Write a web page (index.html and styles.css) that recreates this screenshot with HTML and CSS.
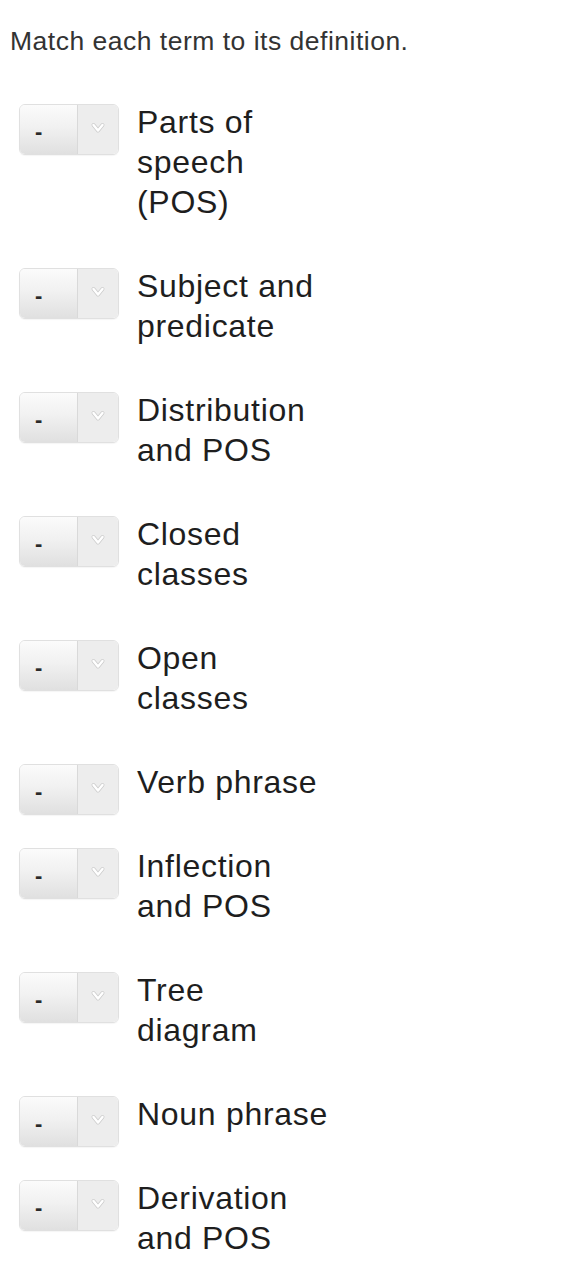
FILE: index.html
```html
<!DOCTYPE html>
<html lang="en">
<head>
<meta charset="utf-8">
<title>Match each term</title>
<link rel="stylesheet" href="styles.css">
</head>
<body>
<p class="prompt">Match each term to its definition.</p>
<div class="list">
  <div class="row"><div class="select"><span class="val">-</span><span class="arrow"><svg width="16" height="12" viewBox="0 0 16 12"><path d="M3.5 3 L8 8.5 L12.5 3" fill="none" stroke="#cdcdcd" stroke-width="4" stroke-linecap="round" stroke-linejoin="round"/><path d="M3.5 3 L8 8.5 L12.5 3" fill="none" stroke="#ffffff" stroke-width="2.4" stroke-linecap="round" stroke-linejoin="round"/></svg></span></div><div class="term">Parts of speech (POS)</div></div>
  <div class="row"><div class="select"><span class="val">-</span><span class="arrow"><svg width="16" height="12" viewBox="0 0 16 12"><path d="M3.5 3 L8 8.5 L12.5 3" fill="none" stroke="#cdcdcd" stroke-width="4" stroke-linecap="round" stroke-linejoin="round"/><path d="M3.5 3 L8 8.5 L12.5 3" fill="none" stroke="#ffffff" stroke-width="2.4" stroke-linecap="round" stroke-linejoin="round"/></svg></span></div><div class="term">Subject and predicate</div></div>
  <div class="row"><div class="select"><span class="val">-</span><span class="arrow"><svg width="16" height="12" viewBox="0 0 16 12"><path d="M3.5 3 L8 8.5 L12.5 3" fill="none" stroke="#cdcdcd" stroke-width="4" stroke-linecap="round" stroke-linejoin="round"/><path d="M3.5 3 L8 8.5 L12.5 3" fill="none" stroke="#ffffff" stroke-width="2.4" stroke-linecap="round" stroke-linejoin="round"/></svg></span></div><div class="term">Distribution and POS</div></div>
  <div class="row"><div class="select"><span class="val">-</span><span class="arrow"><svg width="16" height="12" viewBox="0 0 16 12"><path d="M3.5 3 L8 8.5 L12.5 3" fill="none" stroke="#cdcdcd" stroke-width="4" stroke-linecap="round" stroke-linejoin="round"/><path d="M3.5 3 L8 8.5 L12.5 3" fill="none" stroke="#ffffff" stroke-width="2.4" stroke-linecap="round" stroke-linejoin="round"/></svg></span></div><div class="term">Closed classes</div></div>
  <div class="row"><div class="select"><span class="val">-</span><span class="arrow"><svg width="16" height="12" viewBox="0 0 16 12"><path d="M3.5 3 L8 8.5 L12.5 3" fill="none" stroke="#cdcdcd" stroke-width="4" stroke-linecap="round" stroke-linejoin="round"/><path d="M3.5 3 L8 8.5 L12.5 3" fill="none" stroke="#ffffff" stroke-width="2.4" stroke-linecap="round" stroke-linejoin="round"/></svg></span></div><div class="term">Open classes</div></div>
  <div class="row"><div class="select"><span class="val">-</span><span class="arrow"><svg width="16" height="12" viewBox="0 0 16 12"><path d="M3.5 3 L8 8.5 L12.5 3" fill="none" stroke="#cdcdcd" stroke-width="4" stroke-linecap="round" stroke-linejoin="round"/><path d="M3.5 3 L8 8.5 L12.5 3" fill="none" stroke="#ffffff" stroke-width="2.4" stroke-linecap="round" stroke-linejoin="round"/></svg></span></div><div class="term">Verb phrase</div></div>
  <div class="row"><div class="select"><span class="val">-</span><span class="arrow"><svg width="16" height="12" viewBox="0 0 16 12"><path d="M3.5 3 L8 8.5 L12.5 3" fill="none" stroke="#cdcdcd" stroke-width="4" stroke-linecap="round" stroke-linejoin="round"/><path d="M3.5 3 L8 8.5 L12.5 3" fill="none" stroke="#ffffff" stroke-width="2.4" stroke-linecap="round" stroke-linejoin="round"/></svg></span></div><div class="term">Inflection and POS</div></div>
  <div class="row"><div class="select"><span class="val">-</span><span class="arrow"><svg width="16" height="12" viewBox="0 0 16 12"><path d="M3.5 3 L8 8.5 L12.5 3" fill="none" stroke="#cdcdcd" stroke-width="4" stroke-linecap="round" stroke-linejoin="round"/><path d="M3.5 3 L8 8.5 L12.5 3" fill="none" stroke="#ffffff" stroke-width="2.4" stroke-linecap="round" stroke-linejoin="round"/></svg></span></div><div class="term">Tree diagram</div></div>
  <div class="row"><div class="select"><span class="val">-</span><span class="arrow"><svg width="16" height="12" viewBox="0 0 16 12"><path d="M3.5 3 L8 8.5 L12.5 3" fill="none" stroke="#cdcdcd" stroke-width="4" stroke-linecap="round" stroke-linejoin="round"/><path d="M3.5 3 L8 8.5 L12.5 3" fill="none" stroke="#ffffff" stroke-width="2.4" stroke-linecap="round" stroke-linejoin="round"/></svg></span></div><div class="term">Noun phrase</div></div>
  <div class="row"><div class="select"><span class="val">-</span><span class="arrow"><svg width="16" height="12" viewBox="0 0 16 12"><path d="M3.5 3 L8 8.5 L12.5 3" fill="none" stroke="#cdcdcd" stroke-width="4" stroke-linecap="round" stroke-linejoin="round"/><path d="M3.5 3 L8 8.5 L12.5 3" fill="none" stroke="#ffffff" stroke-width="2.4" stroke-linecap="round" stroke-linejoin="round"/></svg></span></div><div class="term">Derivation and POS</div></div>
</div>
</body>
</html>
```

FILE: styles.css
```css
html, body {
  margin: 0;
  padding: 0;
  background: #ffffff;
}

body {
  font-family: "Liberation Sans", Arial, Helvetica, sans-serif;
  color: #222222;
}

.prompt {
  margin: 26px 0 0 10px;
  font-size: 26.5px;
  line-height: 30px;
  letter-spacing: 0.5px;
  color: #333333;
}

.list {
  margin-top: 46px;
  display: flex;
  flex-direction: column;
}

.row {
  display: flex;
  align-items: flex-start;
  padding-left: 19px;
  padding-bottom: 44px;
}

.select {
  box-sizing: border-box;
  width: 100px;
  height: 51px;
  margin-top: 2px;
  margin-bottom: -13px;
  border: 1px solid #e0e0e0;
  border-radius: 6px;
  display: flex;
  overflow: hidden;
  flex-shrink: 0;
  box-shadow: 0 1px 1px rgba(0, 0, 0, 0.04);
}

.val {
  width: 58px;
  box-sizing: border-box;
  background: linear-gradient(#fbfbfb, #f1f1f1 45%, #e0e0e0);
  border-right: 1px solid #d9d9d9;
  display: flex;
  align-items: center;
  padding-left: 15px;
  padding-top: 4px;
  font-size: 22px;
  font-weight: bold;
  color: #2a2a2a;
}

.arrow {
  flex: 1;
  background: #ededed;
  display: flex;
  align-items: center;
  justify-content: center;
  padding-bottom: 4px;
}

.term {
  margin-left: 18px;
  width: 195px;
  font-size: 32px;
  line-height: 40px;
  letter-spacing: 0.7px;
  color: #1e1e1e;
}
```
